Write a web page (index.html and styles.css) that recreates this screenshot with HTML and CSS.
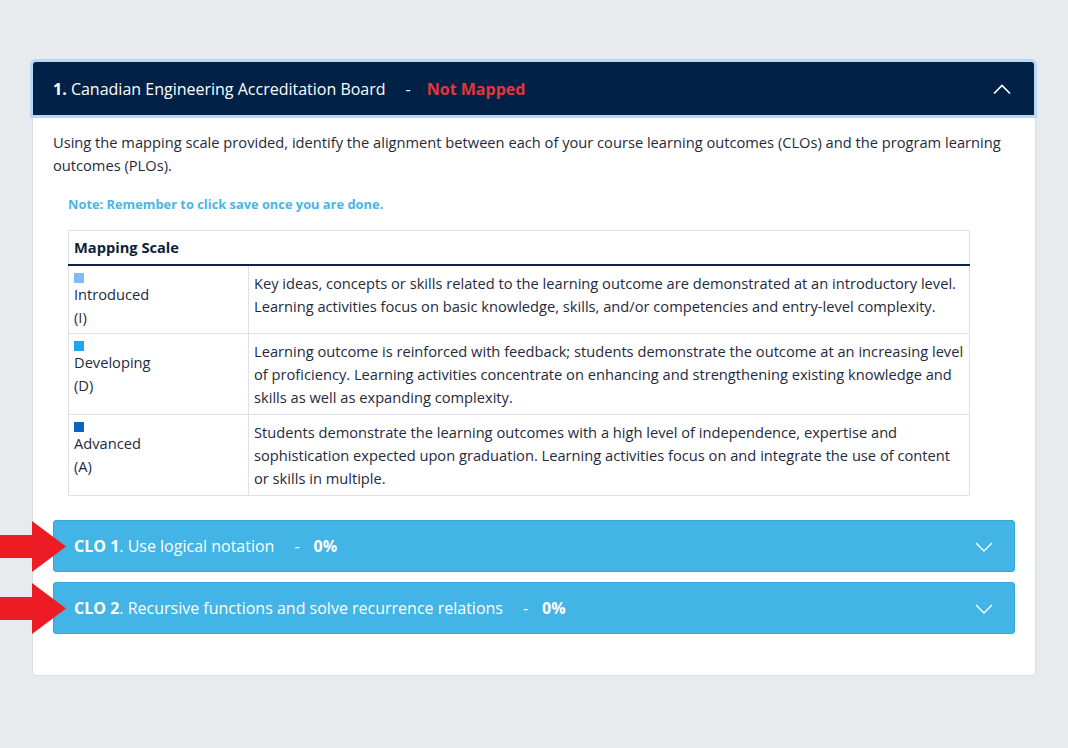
FILE: index.html
```html
<!DOCTYPE html>
<html>
<head>
<meta charset="utf-8">
<link rel="stylesheet" href="styles.css">
</head>
<body>
<div class="card">
  <div class="card-head">
    <div class="head-title"><b>1.</b> Canadian Engineering Accreditation Board<span class="sep">-</span><span class="status">Not Mapped</span></div>
    <svg class="chev" width="18" height="10" viewBox="0 0 18 10"><polyline points="1,9.5 9,1.5 17,9.5" fill="none" stroke="#fff" stroke-width="1.6"/></svg>
  </div>
  <div class="card-body">
    <p class="intro">Using the mapping scale provided, identify the alignment between each of your course learning outcomes (CLOs) and the program learning outcomes (PLOs).</p>
    <div class="indent">
      <p class="note">Note: Remember to click save once you are done.</p>
      <table class="scale">
        <thead>
          <tr><th colspan="2">Mapping Scale</th></tr>
        </thead>
        <tbody>
          <tr>
            <td class="lvl"><span class="sq sq-i"></span>Introduced<br>(I)</td>
            <td>Key ideas, concepts or skills related to the learning outcome are demonstrated at an introductory level. Learning activities focus on basic knowledge, skills, and/or competencies and entry-level complexity.</td>
          </tr>
          <tr>
            <td class="lvl"><span class="sq sq-d"></span>Developing<br>(D)</td>
            <td>Learning outcome is reinforced with feedback; students demonstrate the outcome at an increasing level of proficiency. Learning activities concentrate on enhancing and strengthening existing knowledge and skills as well as expanding complexity.</td>
          </tr>
          <tr>
            <td class="lvl"><span class="sq sq-a"></span>Advanced<br>(A)</td>
            <td>Students demonstrate the learning outcomes with a high level of independence, expertise and sophistication expected upon graduation. Learning activities focus on and integrate the use of content or skills in multiple.</td>
          </tr>
        </tbody>
      </table>
    </div>
    <div class="clos">
      <div class="clo">
        <svg class="arrow" width="66" height="51" viewBox="0 0 66 51"><polygon points="0,14 32,14 32,0 66,25.5 32,51 32,37 0,37" fill="#ed1c24"/></svg>
        <div class="clo-title"><b>CLO 1</b>. Use logical notation<span class="sep">-</span><b>0%</b></div>
        <svg class="chev" width="18" height="10" viewBox="0 0 18 10"><polyline points="1,1 9,9 17,1" fill="none" stroke="#fff" stroke-width="1.4"/></svg>
      </div>
      <div class="clo">
        <svg class="arrow" width="66" height="51" viewBox="0 0 66 51"><polygon points="0,14 32,14 32,0 66,25.5 32,51 32,37 0,37" fill="#ed1c24"/></svg>
        <div class="clo-title"><b>CLO 2</b>. Recursive functions and solve recurrence relations<span class="sep">-</span><b>0%</b></div>
        <svg class="chev" width="18" height="10" viewBox="0 0 18 10"><polyline points="1,1 9,9 17,1" fill="none" stroke="#fff" stroke-width="1.4"/></svg>
      </div>
    </div>
  </div>
</div>
</body>
</html>
```
FILE: styles.css
```css
html, body {
  margin: 0;
  padding: 0;
  background: #e8ebee;
  font-family: "Open Sans", "Noto Sans", sans-serif;
  color: #1f2a3d;
}

.card {
  margin: 60px 0 0 32px;
  width: 1002px;
  background: #fff;
  border: 1px solid #dcdfe3;
  border-radius: 4px;
}

.card-head {
  margin: 1px 1px 0 0;
  height: 53px;
  background: #012147;
  box-shadow: 0 0 0 3px #bcd6f7;
  border-radius: 3px 3px 0 0;
  display: flex;
  align-items: center;
  justify-content: space-between;
  padding: 0 23px 0 20px;
  color: #fff;
  font-size: 16px;
}

.head-title b { font-weight: 700; }

.sep {
  display: inline-block;
  padding: 0 16px 0 20px;
}

.status {
  color: #e5353b;
  font-weight: 700;
}

.card-body {
  padding: 16px 20px 41px 20px;
}

.intro {
  margin: 0 0 18px;
  font-size: 14.66px;
  line-height: 23px;
}

.indent {
  padding-left: 15px;
}

.note {
  margin: 0 0 17px;
  font-size: 12.85px;
  line-height: 18px;
  font-weight: 700;
  color: #48b5e6;
}

.scale {
  width: 902px;
  border-collapse: collapse;
  font-size: 14.66px;
  line-height: 23px;
}

.scale th {
  text-align: left;
  font-weight: 700;
  color: #0e1f3a;
  padding: 5px 5px;
  border: 1px solid #dee2e6;
  border-bottom: 2px solid #0b2447;
}

.scale td {
  vertical-align: top;
  padding: 6px 5px 5px;
  border: 1px solid #dee2e6;
}

.scale td.lvl {
  width: 169px;
  padding-top: 7px;
  padding-bottom: 4px;
}

.sq {
  display: block;
  width: 10px;
  height: 10px;
}
.sq-i { background: #80bdf6; }
.sq-d { background: #1ea6f2; }
.sq-a { background: #0a63c0; }

.clos {
  margin-top: 24px;
  display: flex;
  flex-direction: column;
  gap: 10px;
}

.clo {
  position: relative;
  box-sizing: border-box;
  height: 52px;
  background: #42b4e5;
  border: 1px solid #3aa6d6;
  border-radius: 3px;
  display: flex;
  align-items: center;
  justify-content: space-between;
  padding: 0 21px 0 20px;
  color: #fff;
  font-size: 16px;
}

.clo .sep {
  padding: 0 14px 0 20px;
}

.clo .chev {
  margin-top: 1px;
}

.arrow {
  position: absolute;
  left: -54px;
  top: 0;
}
```
